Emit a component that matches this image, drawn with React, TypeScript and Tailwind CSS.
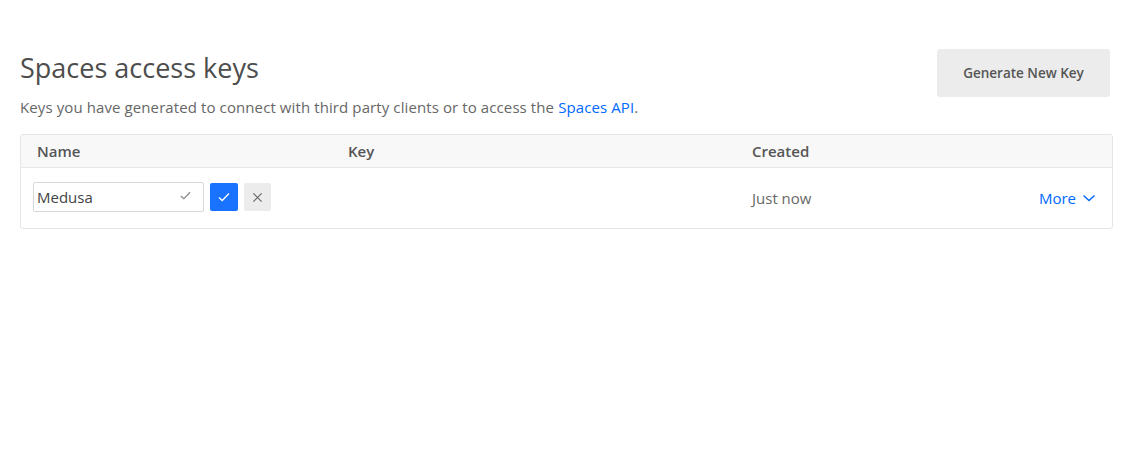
import React from 'react';

function CheckIcon({ className }: { className?: string }) {
  return (
    <svg viewBox="0 0 14 14" className={className} fill="none" stroke="currentColor" strokeWidth="1.3">
      <path d="M2 7.5l3.2 3L12 3.5" />
    </svg>
  );
}

function XIcon({ className }: { className?: string }) {
  return (
    <svg viewBox="0 0 12 12" className={className} fill="none" stroke="currentColor" strokeWidth="1.3">
      <path d="M1.5 1.5l9 9M10.5 1.5l-9 9" />
    </svg>
  );
}

export default function App() {
  return (
    <div className="w-[1147px] h-[451px] bg-white font-['Open_Sans',sans-serif]">
      <div className="pl-5 pr-[34px] pt-[49px]">
        <div className="flex justify-between items-start">
          <div>
            <h1 className="mt-[2px] text-[27px] leading-[34px] text-[#4d4d4d] font-normal">Spaces access keys</h1>
            <p className="mt-[12px] text-[15px] leading-5 tracking-[0.1px] text-[#676767]">
              Keys you have generated to connect with third party clients or to access the{' '}
              <span className="text-[#0069ff]">Spaces API</span>.
            </p>
          </div>
          <button className="mr-[3px] w-[173px] h-[48px] rounded-[3px] bg-[#ececec] text-[#555] text-[13.5px] font-semibold">
            Generate New Key
          </button>
        </div>

        <div className="mt-[17px] border border-[#e5e5e5] rounded-[3px]">
          <div className="flex items-center h-[33px] bg-[#f8f8f8] border-b border-[#e8e8e8] text-[15px] font-semibold text-[#555] rounded-t-[3px]">
            <div className="w-[327px] pl-4">Name</div>
            <div className="w-[404px]">Key</div>
            <div>Created</div>
          </div>
          <div className="flex items-center h-[60px] text-[15px]">
            <div className="w-[327px] pl-3 flex items-center gap-[6px] -mt-[2px]">
              <div className="w-[171px] h-[30px] border border-[#d8d8d8] rounded-[2px] flex items-center justify-between pl-[3px] pr-[11px]">
                <span className="text-[#444]">Medusa</span>
                <CheckIcon className="w-[13px] h-[13px] text-[#888] -mt-1" />
              </div>
              <button className="w-[28px] h-[28px] rounded-[2px] bg-[#1a73ff] flex items-center justify-center">
                <CheckIcon className="w-[14px] h-[14px] text-white" />
              </button>
              <button className="w-[27px] h-[28px] rounded-[2px] bg-[#ececec] flex items-center justify-center">
                <XIcon className="w-[11px] h-[11px] text-[#666]" />
              </button>
            </div>
            <div className="w-[404px]" />
            <div className="flex-1 text-[#676767]">Just now</div>
            <div className="pr-[17px] flex items-center gap-[6px] text-[#0069ff]">
              More
              <svg viewBox="0 0 12 8" className="w-[13px] h-[8px]" fill="none" stroke="currentColor" strokeWidth="1.4">
                <path d="M1 1.5l5.5 5 5.5-5" />
              </svg>
            </div>
          </div>
        </div>
      </div>
    </div>
  );
}
